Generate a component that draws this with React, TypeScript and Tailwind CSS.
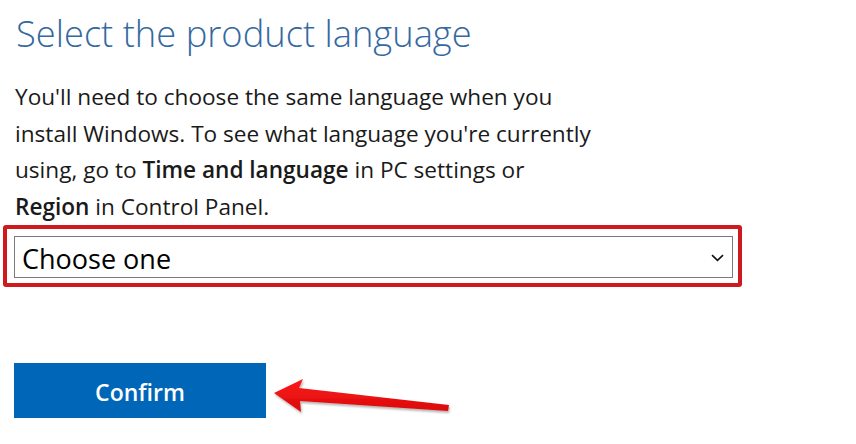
const Chevron = () => (
  <svg width="13" height="8" viewBox="0 0 13 8" fill="none">
    <path d="M1 1.2 L6.5 6.4 L12 1.2" stroke="#111" strokeWidth="1.6" />
  </svg>
);

const Arrow = () => (
  <svg width="182" height="42" viewBox="0 0 182 42" className="overflow-visible">
    <defs>
      <linearGradient id="arrowFill" x1="0" y1="0" x2="0" y2="1">
        <stop offset="0" stopColor="#ff1a1a" />
        <stop offset="1" stopColor="#d80c0c" />
      </linearGradient>
      <filter id="arrowShadow" x="-10%" y="-30%" width="120%" height="180%">
        <feDropShadow dx="1" dy="2" stdDeviation="1.2" floodColor="#000" floodOpacity="0.3" />
      </filter>
    </defs>
    <polygon
      points="4,17 33,3 29,12 179,29 178,35 30,25 31,36"
      fill="url(#arrowFill)"
      filter="url(#arrowShadow)"
    />
  </svg>
);

const App = () => {
  return (
    <div className="w-[856px] h-[444px] bg-white overflow-hidden font-['Open_Sans',sans-serif]">
      <h1 className="ml-[16px] mt-[15px] text-[36.3px] leading-none font-light text-[#34699f] whitespace-nowrap">
        Select the product language
      </h1>
      <p className="ml-[15px] mt-[28px] text-[22.6px] leading-[36.5px] text-[#1a1a1a] whitespace-nowrap">
        You'll need to choose the same language when you
        <br />
        install Windows. To see what language you're currently
        <br />
        using, go to <b className="font-semibold">Time and language</b> in PC settings or
        <br />
        <b className="font-semibold">Region</b> in Control Panel.
      </p>
      <div className="ml-[3px] w-[739px] h-[62px] border-4 border-[#cc1a1f] rounded-[3px] pl-[7px] pt-[7px]">
        <div className="w-[719px] h-[42px] border border-[#7a7a7a] flex items-center justify-between pl-[7px] pr-[8px] pt-[2px]">
          <span className="text-[27px] leading-none text-black">Choose one</span>
          <Chevron />
        </div>
      </div>
      <div className="mt-[76px] ml-[14px] flex items-center">
        <button className="w-[252px] h-[55px] bg-[#0067b8] text-white text-[23px] font-semibold pt-[3px]">
          Confirm
        </button>
        <div className="ml-[4px] mt-[12px]">
          <Arrow />
        </div>
      </div>
    </div>
  );
};

export default App;
